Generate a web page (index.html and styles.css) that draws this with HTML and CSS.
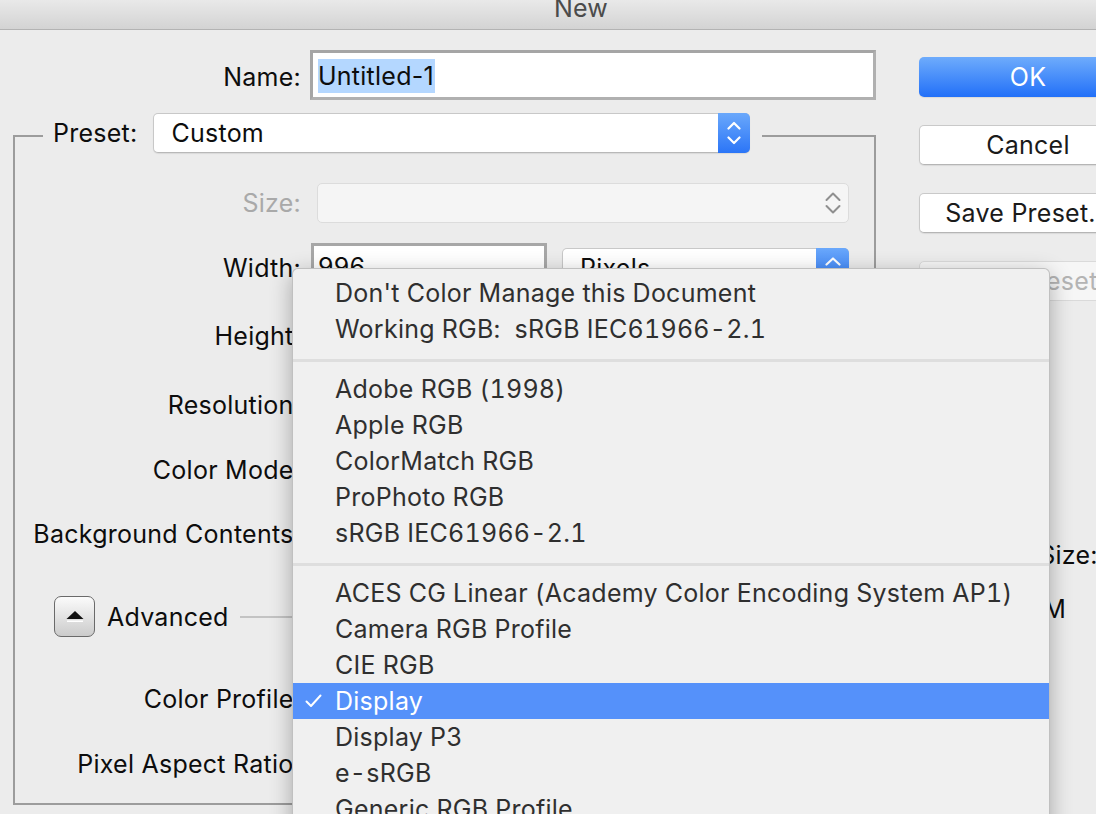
FILE: index.html
```html
<!DOCTYPE html>
<html>
<head>
<meta charset="utf-8">
<title>New</title>
<link rel="stylesheet" href="styles.css">
</head>
<body>
<div class="window">
  <div class="titlebar"><span class="title">New</span></div>
  <div class="content">
    <div class="main">
      <div class="name-row">
        <div class="name-label">Name:</div>
        <div class="name-input"><span class="sel-text">Untitled-1</span></div>
      </div>
      <div class="group">
        <div class="group-head">
          <div class="gh-left"></div>
          <div class="gh-label">Preset:</div>
          <div class="popup preset">
            <span class="popup-text">Custom</span>
            <span class="stepper">
              <svg width="14" height="24" viewBox="0 0 14 24"><path d="M1.5 7.5 L7 2 L12.5 7.5 M1.5 16.5 L7 22 L12.5 16.5" fill="none" stroke="#fff" stroke-width="2.2" stroke-linecap="round" stroke-linejoin="round"/></svg>
            </span>
          </div>
          <div class="gh-right"></div>
        </div>
        <div class="group-body">
          <div class="row row-size">
            <div class="label dim">Size:</div>
            <div class="popup disabled size-pop">
              <span class="chev">
                <svg width="16" height="24" viewBox="0 0 16 24"><path d="M1.5 9 L8 2.5 L14.5 9 M1.5 15 L8 21.5 L14.5 15" fill="none" stroke="#8f8f8f" stroke-width="2" stroke-linecap="round" stroke-linejoin="round"/></svg>
              </span>
            </div>
          </div>
          <div class="row row-field r-width">
            <div class="label">Width:</div>
            <div class="field">996</div>
            <div class="popup unit">
              <span class="popup-text">Pixels</span>
              <span class="stepper">
                <svg width="16" height="24" viewBox="0 0 16 24"><path d="M1.5 8.5 L8 2.5 L14.5 8.5 M1.5 15.5 L8 21.5 L14.5 15.5" fill="none" stroke="#fff" stroke-width="2.2" stroke-linecap="round" stroke-linejoin="round"/></svg>
              </span>
            </div>
          </div>
          <div class="row row-field r-height">
            <div class="label">Height:</div>
            <div class="field">814</div>
            <div class="popup unit"><span class="popup-text">Pixels</span><span class="stepper"></span></div>
          </div>
          <div class="row row-field r-res">
            <div class="label">Resolution:</div>
            <div class="field">72</div>
            <div class="popup unit"><span class="popup-text">Pixels/Inch</span><span class="stepper"></span></div>
          </div>
          <div class="row row-pop r-mode">
            <div class="label">Color Mode:</div>
            <div class="popup mode"><span class="popup-text">RGB Color</span><span class="stepper"></span></div>
            <div class="popup bits"><span class="popup-text">8 bit</span><span class="stepper"></span></div>
          </div>
          <div class="row row-pop r-bg">
            <div class="label">Background Contents:</div>
            <div class="popup wide"><span class="popup-text">White</span><span class="stepper"></span></div>
          </div>
          <div class="adv-row">
            <div class="adv-btn">
              <svg width="20" height="13" viewBox="0 0 20 13"><polygon points="1.5,9 10,1 18.5,9" fill="#111"/><rect x="2" y="10.5" width="16" height="1.5" fill="#fff"/></svg>
            </div>
            <div class="adv-text">Advanced</div>
            <div class="adv-line"></div>
          </div>
          <div class="row row-pop r-profile">
            <div class="label">Color Profile:</div>
            <div class="popup wide"><span class="popup-text">Display</span><span class="stepper"></span></div>
          </div>
          <div class="row row-pop r-aspect">
            <div class="label">Pixel Aspect Ratio:</div>
            <div class="popup wide"><span class="popup-text">Square Pixels</span><span class="stepper"></span></div>
          </div>
        </div>
      </div>
    </div>
    <div class="side">
      <div class="btn ok">OK</div>
      <div class="btn">Cancel</div>
      <div class="btn">Save Preset...</div>
      <div class="btn disabled-btn">Delete Preset...</div>
      <div class="info info-label">Image Size:</div>
      <div class="info info-value">2.85M</div>
    </div>
  </div>

  <div class="menu">
    <div class="mi">Don't Color Manage this Document</div>
    <div class="mi">Working RGB:&nbsp; sRGB IEC61966-2.1</div>
    <div class="sep"><div class="sep-line"></div></div>
    <div class="mi">Adobe RGB (1998)</div>
    <div class="mi">Apple RGB</div>
    <div class="mi">ColorMatch RGB</div>
    <div class="mi">ProPhoto RGB</div>
    <div class="mi">sRGB IEC61966-2.1</div>
    <div class="sep"><div class="sep-line"></div></div>
    <div class="mi">ACES CG Linear (Academy Color Encoding System AP1)</div>
    <div class="mi">Camera RGB Profile</div>
    <div class="mi">CIE RGB</div>
    <div class="mi sel">
      <svg class="check" width="17" height="14" viewBox="0 0 17 14"><path d="M1.5 7.5 L6 12 L15.5 1.5" fill="none" stroke="#fff" stroke-width="2" stroke-linecap="round" stroke-linejoin="round"/></svg>
      Display
    </div>
    <div class="mi">Display P3</div>
    <div class="mi">e-sRGB</div>
    <div class="mi">Generic RGB Profile</div>
  </div>
</div>
</body>
</html>
```

FILE: styles.css
```css
* { box-sizing: border-box; }

html, body {
  margin: 0;
  padding: 0;
}

body {
  width: 1096px;
  height: 814px;
  overflow: hidden;
  background: #ececec;
  font-family: Inter, "Noto Sans", sans-serif;
  font-size: 25px;
  letter-spacing: 0.25px;
  color: #0d0d0d;
}

.window {
  position: relative;
  width: 1162px;
  height: 814px;
  background: #ececec;
}

/* title bar */
.titlebar {
  height: 30px;
  background: linear-gradient(#e9e9e9, #d3d3d3);
  border-bottom: 1px solid #b3b3b3;
  display: flex;
  justify-content: center;
  overflow: hidden;
}

.title {
  color: #4b4b4b;
  line-height: 30px;
  margin-top: -7px;
}

.content {
  display: flex;
  padding-left: 13px;
  padding-top: 20px;
}

.main {
  width: 863px;
  flex: none;
}

/* name */
.name-row {
  display: flex;
  align-items: center;
  height: 50px;
}

.name-label {
  width: 288px;
  text-align: right;
  line-height: 30px;
  padding-top: 3px;
}

.name-input {
  margin-left: 9px;
  width: 566px;
  height: 50px;
  border: 3px solid #a5a5a5;
  border-bottom-color: #b0b0b0;
  border-right-color: #b0b0b0;
  background: #fff;
  display: flex;
  align-items: center;
  padding-left: 5px;
  padding-top: 1px;
}

.sel-text {
  background: #b4d7ff;
  line-height: 34px;
  padding-right: 1px;
}

/* group box */
.group {
  margin-top: 13px;
}

.group-head {
  display: flex;
  align-items: center;
  height: 40px;
}

.gh-left {
  width: 30px;
  height: 18px;
  align-self: flex-end;
  border-top: 2px solid #9c9c9c;
  border-left: 2px solid #9c9c9c;
}

.gh-label {
  margin-left: 10px;
  line-height: 30px;
}

.gh-right {
  flex: 1;
  margin-left: 12px;
  height: 18px;
  align-self: flex-end;
  border-top: 2px solid #9c9c9c;
  border-right: 2px solid #9c9c9c;
}

.group-body {
  display: flex;
  flex-direction: column;
  border: 2px solid #9c9c9c;
  border-top: none;
  padding-bottom: 19px;
}

.row {
  display: flex;
  align-items: center;
}

.label {
  width: 286px;
  flex: none;
  text-align: right;
  line-height: 30px;
  white-space: nowrap;
}

.label.dim { color: #a9a9a9; }

/* popups */
.popup {
  display: flex;
  align-items: center;
  height: 40px;
  border-radius: 5px;
  background: #fff;
  border: 1px solid #c8c8c8;
  border-bottom-color: #b8b8b8;
  box-shadow: 0 1px 1px rgba(0, 0, 0, 0.08);
  padding-left: 17px;
  line-height: 30px;
  flex: none;
}

.popup-text { white-space: nowrap; }

.stepper {
  margin: -1px -1px -1px auto;
  align-self: stretch;
  width: 32px;
  background: linear-gradient(#6aa8fb, #2b75f7);
  border-radius: 0 5px 5px 0;
  display: flex;
  align-items: center;
  justify-content: center;
}

.preset {
  margin-left: 16px;
  width: 597px;
}

.row-size {
  height: 40px;
  margin-top: 30px;
}

.size-pop {
  margin-left: 16px;
  width: 532px;
  background: #f5f5f5;
  border-color: #dcdcdc;
  box-shadow: none;
}

.chev {
  margin-left: auto;
  margin-right: 7px;
  display: flex;
}

.row-field { height: 50px; }

.field {
  margin-left: 10px;
  width: 236px;
  height: 50px;
  border: 3px solid #a7a7a7;
  background: #fff;
  padding-left: 4px;
  line-height: 42px;
  flex: none;
}

.unit {
  margin-left: 15px;
  width: 287px;
}

.unit .stepper { width: 33px; }

.r-width { margin-top: 20px; }
.r-height { margin-top: 18px; }
.r-res { margin-top: 19px; }

.row-pop { height: 40px; }
.r-mode { margin-top: 20px; }
.r-bg { margin-top: 24px; }
.r-profile { margin-top: 42px; }
.r-aspect { margin-top: 25px; }

.mode {
  margin-left: 16px;
  width: 300px;
}

.bits {
  margin-left: 12px;
  width: 220px;
}

.wide {
  margin-left: 16px;
  width: 532px;
}

/* advanced */
.adv-row {
  display: flex;
  align-items: center;
  height: 41px;
  margin-top: 42px;
  padding-left: 39px;
}

.adv-btn {
  width: 41px;
  height: 41px;
  flex: none;
  border: 1.5px solid #6a6a6a;
  border-radius: 7px;
  background: linear-gradient(#fbfbfb, #cbcbcb);
  display: flex;
  align-items: center;
  justify-content: center;
}

.adv-text {
  margin-left: 12px;
  line-height: 30px;
  padding-top: 1px;
}

.adv-line {
  flex: 1;
  height: 2px;
  background: #c3c3c3;
  margin-left: 11px;
  margin-right: 14px;
}

/* side buttons */
.side {
  margin-left: 43px;
  width: 218px;
  flex: none;
  display: flex;
  flex-direction: column;
  padding-top: 7px;
}

.btn {
  height: 40px;
  border-radius: 5px;
  display: flex;
  align-items: center;
  justify-content: center;
  line-height: 30px;
  background: #fff;
  border: 1px solid #c9c9c9;
  border-bottom-color: #b5b5b5;
  box-shadow: 0 1px 1px rgba(0, 0, 0, 0.08);
  color: #1a1a1a;
  white-space: nowrap;
  margin-top: 28px;
}

.btn.ok {
  margin-top: 0;
  background: linear-gradient(#6eacfc, #2270f8);
  border: none;
  color: #fff;
}

.btn.disabled-btn {
  background: #f6f6f6;
  border-color: #dadada;
  box-shadow: none;
  color: #b4b4b4;
}

.info {
  text-align: center;
  line-height: 30px;
}

.info-label { margin-top: 239px; }
.info-value { margin-top: 24px; }

/* popup menu */
.menu {
  position: absolute;
  left: 292px;
  top: 268px;
  width: 758px;
  height: 580px;
  background: #f0f0f0;
  border: 1px solid rgba(0, 0, 0, 0.2);
  border-radius: 6px 6px 0 0;
  box-shadow: 0 6px 22px rgba(0, 0, 0, 0.3);
  padding-top: 6px;
  z-index: 10;
  font-variant-numeric: tabular-nums;
}

.mi {
  position: relative;
  height: 36px;
  line-height: 36px;
  padding-left: 42px;
  color: #2f2f2f;
  white-space: nowrap;
}

.mi.sel {
  background: #5591fa;
  color: #fff;
}

.check {
  position: absolute;
  left: 12px;
  top: 11px;
}

.sep {
  height: 24px;
  padding-top: 12px;
}

.sep-line {
  height: 3px;
  background: #dedede;
}
```
